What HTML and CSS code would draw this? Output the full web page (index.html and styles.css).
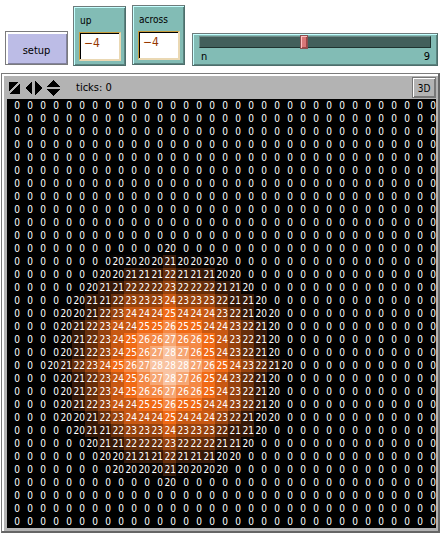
FILE: index.html
```html
<!DOCTYPE html>
<html lang="en">
<head>
<meta charset="utf-8">
<title>Diffusion model</title>
<link rel="stylesheet" href="styles.css">
</head>
<body>
<form class="controls">
  <button class="setup" type="button">setup</button>
  <div class="field up">
    <label for="up">up</label>
    <input id="up" type="text" value="−4">
  </div>
  <div class="field across">
    <label for="across">across</label>
    <input id="across" type="text" value="−4">
  </div>
  <div class="slider">
    <input id="n" type="range" min="0" max="20" value="9">
    <div class="slider-text"><label for="n">n</label><output for="n">9</output></div>
  </div>
</form>
<main class="view">
  <header class="bar">
    <svg class="tools" width="52" height="16" viewBox="0 0 52 16" shape-rendering="crispEdges" aria-hidden="true">
      <path d="M0 2h10L0 11zM11 3v11H0z"/>
      <path d="M23 1v14l-7-7zM26 1v14l7-7z"/>
      <path d="M37 7h14l-7-7zM37 9h14l-7 7z"/>
    </svg>
    <span class="ticks">ticks: 0</span>
    <button class="mode" type="button">3D</button>
  </header>
  <table class="world" aria-label="World"></table>
</main>
<script src="world.js"></script>
</body>
</html>
```
FILE: styles.css
```css
* { box-sizing: border-box; }

body {
  margin: 0;
  padding: 5px 1px 0;
  background: #fff;
  color: #000;
  font-family: "DejaVu Sans Condensed", "DejaVu Sans", sans-serif;
  font-size: 11px;
}

button, input { font: inherit; color: inherit; border-radius: 0; }

.controls {
  display: flex;
  align-items: flex-end;
  height: 61px;
  padding: 0 2px 0 4px;
}

.setup {
  width: 63px;
  height: 34px;
  margin: 0 5px 1px 0;
  padding: 4px 0 0;
  background: #bcbce6;
  border: 1px solid #7b7b7d;
  box-shadow: inset 1px 1px #fff, inset 2px 2px #fff, inset -1px -1px #83839f;
}

.field {
  display: flex;
  flex-direction: column;
  width: 53px;
  height: 60px;
  padding: 8px 6px 0;
  background: #82bcb5;
  border: 1px solid #6e7b7b;
  border-right-color: #4d6e6b;
  border-bottom-color: #4d6e6b;
  box-shadow: inset 1px 1px #c5ffff, inset -1px -1px #5b8480;
  font-size: 10px;
}

.across { margin: 0 7px 1px 6px; }
.field label { line-height: 12px; }

.field input {
  width: 42px;
  height: 29px;
  margin-top: 5px;
  margin-left: -1px;
  padding: 0 4px 7px;
  background: #fff;
  border: 1px solid #c79c3b;
  border-right: 2px solid #ead8b3;
  border-bottom: 2px solid #ead8b3;
  box-shadow: inset 1px 1px #000;
  color: #963700;
  font-size: 12px;
}

.slider {
  flex: 1;
  height: 33px;
  padding: 2px 6px 0;
  background: #82bcb5;
  border: 1px solid #6e7b7b;
  border-right-color: #4d6e6b;
  border-bottom-color: #4d6e6b;
  box-shadow: inset 1px 1px #c5ffff, inset -1px -1px #5b8480;
}

.slider input {
  appearance: none;
  display: block;
  width: 100%;
  height: 12px;
  margin: 0;
  background: #425f5b;
  border: 1px solid #6f8c89;
  border-right: 1px solid #1f3330;
  border-bottom: 1px solid #1f3330;
}

.slider input::-webkit-slider-thumb {
  appearance: none;
  width: 8px;
  height: 14px;
  background: #d97777;
  border: 1px solid #8c5050;
  box-shadow: inset 1px 1px #ffc0c0, inset -1px -1px #a04747;
}

.slider-text {
  display: flex;
  justify-content: space-between;
  padding: 2px 1px 0 2px;
  line-height: 14px;
}

.view {
  margin-top: 7px;
  padding: 2px 2px 3px 3px;
  background: #b3b3b3;
  border: 1px solid #7b7b7b;
  border-right: 2px solid #666;
  border-bottom: 2px solid #666;
  box-shadow: inset 2px 2px #fff;
}

.bar {
  display: flex;
  align-items: center;
  height: 23px;
  padding: 0 0 0 4px;
}

.ticks { margin-left: 15px; }

.mode {
  width: 24px;
  height: 21px;
  margin-left: auto;
  padding: 2px 0 0;
  background: #b3b3b3;
  border: 1px solid #777;
  box-shadow: inset 1px 1px #fff, inset -1px -1px #777;
  font-size: 10px;
}

.world {
  width: calc(100% - 2px);
  margin-left: 2px;
  table-layout: fixed;
  border-collapse: collapse;
  background: #000;
  color: #fff;
  font-size: 10px;
}

.world td {
  height: 13px;
  padding: 1px 0 0;
  line-height: 12px;
  text-align: right;
  white-space: nowrap;
}

.v20 { background: #070301; }
.v21 { background: #351808; }
.v22 { background: #672e0a; }
.v23 { background: #97430e; }
.v24 { background: #c85812; }
.v25 { background: #f16a15; }
.v26 { background: #f48844; }
.v27 { background: #f6a673; }
.v28 { background: #f9c3a1; }
```
FILE: world.js
```js
// Values run from the left edge of the blob to its centre column.
// Both halves mirror around the centre patch.
const size = 33;
const centre = { row: 20, column: 12 };
const rows = [
  [20],
  [20, 20, 20, 20, 21],
  [20, 20, 21, 21, 21, 22],
  [20, 21, 21, 22, 22, 22, 23],
  [20, 21, 21, 22, 23, 23, 23, 24],
  [20, 20, 21, 22, 23, 24, 24, 24, 25],
  [20, 21, 22, 23, 24, 24, 25, 25, 26],
  [20, 21, 22, 23, 24, 25, 26, 26, 27],
  [20, 21, 22, 23, 24, 25, 26, 27, 28],
  [20, 21, 22, 23, 24, 25, 26, 27, 28, 28]
];
const world = document.querySelector(".world");

for (let y = 0; y < size; y++) {
  const line = world.insertRow();
  const values = rows[rows.length - 1 - Math.abs(y - centre.row)] || [];
  for (let x = 0; x < size; x++) {
    const value = values[values.length - 1 - Math.abs(x - centre.column)] || 0;
    const cell = line.insertCell();
    cell.textContent = value;
    if (value) cell.className = "v" + value;
  }
}
```
